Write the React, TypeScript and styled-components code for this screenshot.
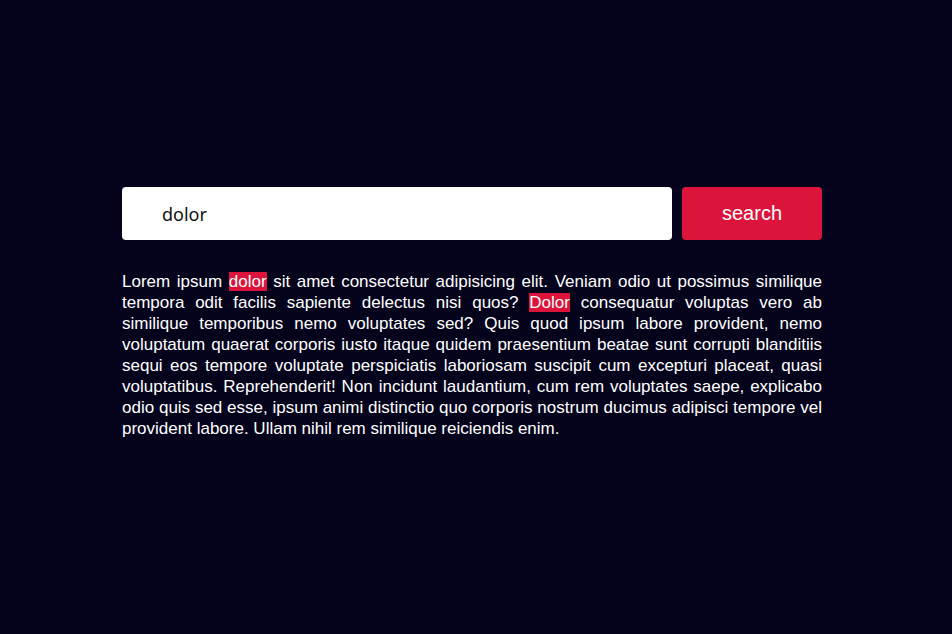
import React from "react";
import styled, { createGlobalStyle } from "styled-components";

const Global = createGlobalStyle`
  html, body { margin: 0; padding: 0; background: #04031b; }
  body { font-family: "Liberation Sans", Arial, sans-serif; }
`;

const Page = styled.main`
  min-height: 634px;
  background: #04031b;
  display: flex;
  justify-content: center;
  padding: 187px 8px 0 0;
  box-sizing: border-box;
`;

const Wrap = styled.div`
  width: 700px;
  display: flex;
  flex-direction: column;
  gap: 31px;
`;

const Bar = styled.form`
  display: flex;
  gap: 10px;
  height: 53px;
`;

const Input = styled.input`
  flex: 1;
  border: none;
  border-radius: 4px;
  background: #ffffff;
  padding: 0 0 0 40px;
  font-family: "Noto Sans", "Open Sans", sans-serif;
  font-size: 18px;
  color: #111;
  outline: none;
`;

const Button = styled.button`
  width: 140px;
  border: none;
  border-radius: 4px;
  background: #dc143c;
  color: #ffffff;
  font-family: "Liberation Sans", Arial, sans-serif;
  font-size: 20px;
  cursor: pointer;
`;

const Text = styled.p`
  margin: 0;
  color: #ffffff;
  font-size: 17px;
  line-height: 21px;
  text-align: justify;
`;

const Mark = styled.mark`
  background: #dc143c;
  color: #ffffff;
`;

export default function App() {
  return (
    <>
      <Global />
      <Page>
        <Wrap>
          <Bar onSubmit={(e) => e.preventDefault()}>
            <Input defaultValue="dolor" />
            <Button type="submit">search</Button>
          </Bar>
          <Text>
            Lorem ipsum <Mark>dolor</Mark> sit amet consectetur adipisicing elit. Veniam odio ut
            possimus similique tempora odit facilis sapiente delectus nisi quos? <Mark>Dolor</Mark>{" "}
            consequatur voluptas vero ab similique temporibus nemo voluptates sed? Quis quod ipsum
            labore provident, nemo voluptatum quaerat corporis iusto itaque quidem praesentium
            beatae sunt corrupti blanditiis sequi eos tempore voluptate perspiciatis laboriosam
            suscipit cum excepturi placeat, quasi voluptatibus. Reprehenderit! Non incidunt
            laudantium, cum rem voluptates saepe, explicabo odio quis sed esse, ipsum animi
            distinctio quo corporis nostrum ducimus adipisci tempore vel provident labore. Ullam
            nihil rem similique reiciendis enim.
          </Text>
        </Wrap>
      </Page>
    </>
  );
}
